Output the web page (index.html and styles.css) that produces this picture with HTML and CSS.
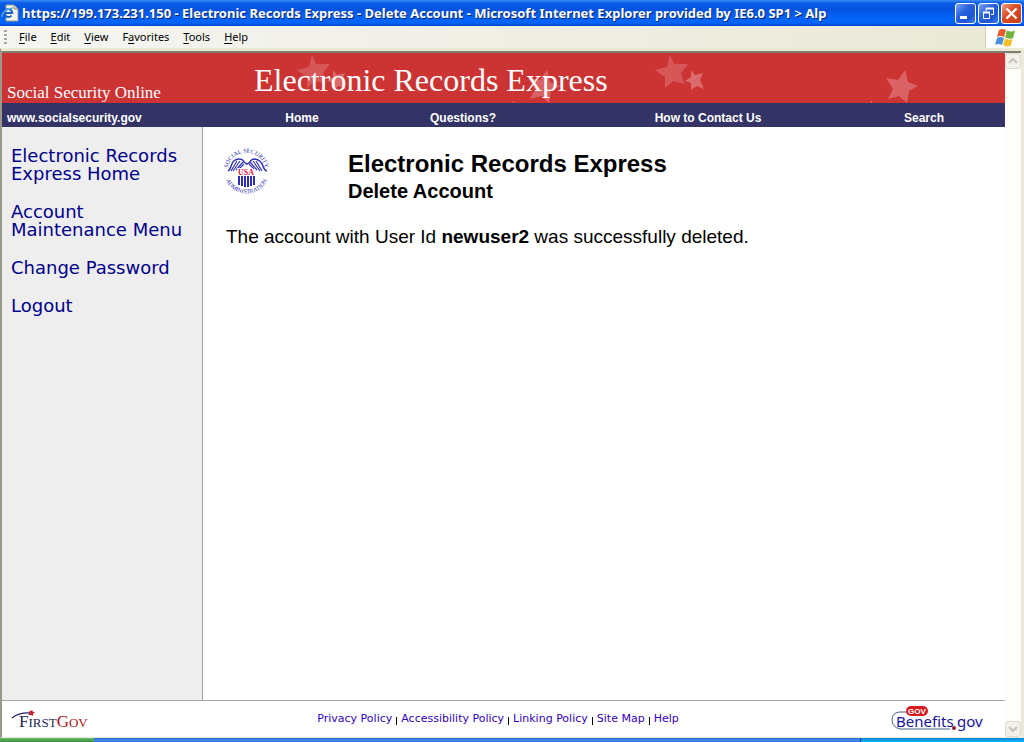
FILE: index.html
```html
<!DOCTYPE html>
<html lang="en">
<head>
<meta charset="utf-8">
<title>Electronic Records Express - Delete Account</title>
<link rel="stylesheet" href="styles.css">
</head>
<body>
<div class="window">
  <header class="titlebar">
    <svg class="page-icon" width="18" height="18" viewBox="0 0 18 18" aria-hidden="true">
      <path d="M5 1h8l4 4v12H5z" fill="#f6f5ec" stroke="#9a9a8c"/>
      <path d="M13 1v4h4" fill="#d5d3c2" stroke="#8c8c80"/>
      <path d="M10.500 11.500a4 4 0 1 1 .8-2.500H4" fill="none" stroke="#1763c4" stroke-width="2"/>
      <path d="M1 13C0 9 6 4 12 4" fill="none" stroke="#58b1ee" stroke-width="1.500"/>
    </svg>
    <h1 class="window-title">https://199.173.231.150 - Electronic Records Express - Delete Account - Microsoft Internet Explorer provided by IE6.0 SP1 &gt; Alp</h1>
    <div class="window-controls">
      <button class="control" aria-label="Minimize"><svg width="19" height="19" viewBox="0 0 19 19"><path d="M4 12h7v3H4z" fill="#fff"/></svg></button>
      <button class="control" aria-label="Restore"><svg width="19" height="19" viewBox="0 0 19 19"><path d="M7 7V4.500h7.500v6H12" fill="none" stroke="#fff"/><path d="M7 4.500h8" stroke="#fff" stroke-width="2"/><path d="M4.500 8.500h6v6h-6z" fill="none" stroke="#fff"/><path d="M4 8.500h7" stroke="#fff" stroke-width="2"/></svg></button>
      <button class="control control-close" aria-label="Close"><svg width="19" height="19" viewBox="0 0 19 19"><path d="M4.500 4.500l10 10M14.500 4.500l-10 10" stroke="#fff" stroke-width="2.400"/></svg></button>
    </div>
  </header>

  <div class="menubar">
    <span class="grip"></span>
    <button class="menu"><u>F</u>ile</button>
    <button class="menu"><u>E</u>dit</button>
    <button class="menu"><u>V</u>iew</button>
    <button class="menu">F<u>a</u>vorites</button>
    <button class="menu"><u>T</u>ools</button>
    <button class="menu"><u>H</u>elp</button>
    <div class="flag">
      <svg width="20" height="19" viewBox="0 0 20 19" aria-hidden="true">
        <path d="M4 2q3-2 7 0L9 9q-4-2-7 0z" fill="#e8592b"/>
        <path d="M12 2.500q4 2 8 0L18 10q-4 1.500-8-.5z" fill="#6db33c"/>
        <path d="M2 10q3-2 7 0l-2 7q-4-2-7 0z" fill="#4b8fdc"/>
        <path d="M10 10.500q4 2 7.500.5L16 17.500q-4 2-8-.5z" fill="#f5bf2c"/>
      </svg>
    </div>
  </div>

  <div class="viewport">
    <div class="page">
      <div class="banner">
        <svg class="stars" aria-hidden="true">
          <defs>
            <pattern id="star-tile" width="358" height="50" patternUnits="userSpaceOnUse">
              <path fill="#d75759" d="M60 2l4 9 14 0-7 9 3 11-11-3-8 7 0-11-10-7 12-3z"/>
              <path fill="#dc6b6d" d="M81 17l4 5 8-2-3 7 4 9-7-3-6 4 0-7-6-2 6-4z"/>
              <path fill="#da6264" d="M295 17l3 12 10 4-9 5-2 12-8-7-11 3 5-10-7-11 12 2z"/>
              <path fill="#dc6d6f" d="M261 48h1v2h-1z"/>
            </pattern>
          </defs>
          <rect width="100%" height="50" fill="url(#star-tile)"/>
        </svg>
        <p class="agency">Social Security Online</p>
        <p class="banner-title">Electronic Records Express</p>
      </div>
      <nav class="topnav">
        <a class="site" href="#">www.socialsecurity.gov</a>
        <a href="#">Home</a>
        <a href="#">Questions?</a>
        <a href="#">How to Contact Us</a>
        <a href="#">Search</a>
      </nav>

      <div class="columns">
        <nav class="sidebar">
          <a href="#">Electronic Records<br>Express Home</a>
          <a href="#">Account<br>Maintenance Menu</a>
          <a href="#">Change Password</a>
          <a href="#">Logout</a>
        </nav>
        <main class="content">
          <div class="heading">
            <svg class="seal" width="48" height="48" viewBox="0 0 48 48" role="img" aria-label="Social Security Administration USA">
              <defs>
                <path id="arc-top" d="M5 29A19 19 0 1 1 42 29"/>
                <path id="arc-bottom" d="M1 24A22.500 22.500 0 1 0 46 24"/>
              </defs>
              <text class="seal-ring" text-anchor="middle"><textPath href="#arc-top" startOffset="50%">SOCIAL SECURITY</textPath></text>
              <text class="seal-ring" text-anchor="middle"><textPath href="#arc-bottom" startOffset="50%">ADMINISTRATION</textPath></text>
              <g fill="none" stroke="#3434b8">
                <path d="M5 24q2-1 3-5 2-7 8-7 4 0 5 3l3 2 3-2q1-3 5-3 6 1 8 7 1 4 4 5" stroke-width="1.500"/>
                <path d="M8 24l6-10M10 24l7-10M13 23l7-8M16 22l5-5M39 24l-6-10M37 24l-7-10M34 23l-7-8M31 22l-5-5" stroke-width="1.200"/>
              </g>
              <text class="seal-usa" x="23" y="28" text-anchor="middle">USA</text>
              <path d="M15 29h2v9h-2zM18 29h2v10h-2zM21 29h2v11h-2zM24 29h2v11h-2zM27 29h2v10h-2zM30 29h2v9h-2z" fill="#2c2cb4"/>
            </svg>
            <div>
              <h2>Electronic Records Express</h2>
              <h3>Delete Account</h3>
            </div>
          </div>
          <p class="message">The account with User Id <strong>newuser2</strong> was successfully deleted.</p>
        </main>
      </div>

      <footer class="footer">
        <a class="footer-logo" href="#" aria-label="FirstGov">
          <svg width="80" height="24" viewBox="0 0 80 24">
            <text class="fg-navy" x="8" y="20"><tspan class="fg-big">F</tspan>IRST<tspan class="fg-red fg-big">G</tspan><tspan class="fg-red">OV</tspan></text>
            <path d="M1 11Q8 5 21 6" fill="none" stroke="#26215c" stroke-width="1.300"/>
            <path d="M21 3l1 2 2 0-2 2 0 2-2-1-3 0 2-2-1-2 2 0z" fill="#cc2030"/>
          </svg>
        </a>
        <div class="footer-links">
          <a href="#">Privacy Policy</a><i></i><a href="#">Accessibility Policy</a><i></i><a href="#">Linking Policy</a><i></i><a href="#">Site Map</a><i></i><a href="#">Help</a>
        </div>
        <a class="footer-logo" href="#" aria-label="GovBenefits.gov">
          <svg width="94" height="26" viewBox="0 0 94 26">
            <path d="M16 6H8Q1 7 1 14t8 9h50" fill="none" stroke="#4a6080"/>
            <rect x="15" y="0" width="22" height="10" rx="5" fill="#d81c20"/>
            <text class="gb-gov" x="26" y="8" text-anchor="middle">GOV</text>
            <text class="gb-name" x="5" y="21">Benefits</text>
            <circle cx="63" cy="22" r="2" fill="#8c1a2c"/>
            <text class="gb-name" x="66" y="21">gov</text>
          </svg>
        </a>
      </footer>
    </div>
    <div class="scrollbar">
      <button class="scroll-button" aria-label="Scroll up"><svg width="14" height="14" viewBox="0 0 14 14"><path d="M3 9l4-4 4 4" fill="none" stroke="#c5c3b8" stroke-width="2"/></svg></button>
      <button class="scroll-button" aria-label="Scroll down"><svg width="14" height="14" viewBox="0 0 14 14"><path d="M3 5l4 4 4-4" fill="none" stroke="#c5c3b8" stroke-width="2"/></svg></button>
    </div>
  </div>
  <div class="taskbar"><span class="start"></span><span class="tasks"></span><span class="tray"></span></div>
</div>
</body>
</html>
```
FILE: styles.css
```css
* { box-sizing: border-box; }
html, body { height: 100%; }
body { margin: 0; font-family: "Liberation Sans", Arial, sans-serif; color: #000; }
p, h1, h2, h3 { margin: 0; }
a { text-decoration: none; }
button { margin: 0; padding: 0; border: 0; background: none; font: inherit; color: inherit; }
svg { display: block; }

.window { display: flex; flex-direction: column; min-height: 100%; }

.titlebar {
  display: flex; align-items: center; height: 26px; padding: 0 2px 0 1px; gap: 3px;
  background: linear-gradient(#3c8cf8 0, #0a5ce6 3px, #0453e0 10px, #0464fb 19px, #0264fa 23px, #0146cc 26px);
}
.window-title {
  flex: 1; overflow: hidden; white-space: nowrap;
  font: bold 13px/20px "Noto Sans", "Open Sans", sans-serif;
  color: #fff; text-shadow: 1px 1px #0a246a;
}
.window-controls { display: flex; gap: 2px; }
.control {
  width: 21px; height: 21px; border: 1px solid #fff; border-radius: 3px;
  background: linear-gradient(135deg, #7ea5f5, #2a62dc 40%, #1d55d4 70%, #3f80f0);
}
.control-close { background: linear-gradient(135deg, #f0a088, #dc4f28 40%, #cc3a12); }

.menubar {
  display: flex; align-items: center; height: 22px;
  background: linear-gradient(90deg, #f5f5f3, #ebe8d6);
  font: 11px/16px "Noto Sans", "Open Sans", sans-serif;
}
.grip {
  width: 3px; height: 14px; margin: 0 12px 0 4px;
  background: repeating-linear-gradient(#aaa89c 0 2px, transparent 2px 4px);
}
.menu { margin-right: 14px; white-space: nowrap; }
.menu u { text-underline-offset: 2px; }
.flag {
  display: flex; align-items: center; justify-content: center; align-self: stretch;
  width: 39px; margin-left: auto; background: #fff; border-left: 1px solid #d0ccb8;
}

.viewport {
  flex: 1; display: flex; padding-top: 2px; background: #fff;
  border: solid #ece9d8; border-width: 3px 3px 1px 2px; border-left-color: #9a9888;
  box-shadow: inset 0 2px #817f70;
}
.page { flex: 1; display: flex; flex-direction: column; min-width: 0; }

.banner {
  position: relative; height: 50px; display: grid; grid-template-columns: 252px 1fr; align-items: end;
  background: #cc3333; color: #fff; font-family: "Liberation Serif", Georgia, serif;
}
.stars { position: absolute; top: 0; right: 0; width: calc(100% - 250px); height: 50px; }
.agency { padding-left: 5px; font-size: 17px; line-height: 20px; white-space: nowrap; }
.banner-title { position: relative; font-size: 32px; line-height: 46px; white-space: nowrap; }

.topnav {
  display: grid; grid-template-columns: 249fr 102fr 220fr 270fr 162fr; align-items: center;
  height: 24px; padding-top: 5px; background: #333366; font-size: 12px; line-height: 18px; font-weight: bold;
}
.topnav a { color: #fff; text-align: center; white-space: nowrap; }
.topnav .site { padding-left: 5px; text-align: left; }

.columns { flex: 1; display: flex; }
.sidebar {
  width: 201px; flex: none; display: flex; flex-direction: column; gap: 20px; padding: 20px 0 0 9px;
  background: #eeeeee; border-right: 1px solid #a5a5a5;
  font: 18px/18px "DejaVu Sans", Verdana, sans-serif; white-space: nowrap;
}
.sidebar a { color: #00008b; }
.content { flex: 1; padding: 20px; }
.heading { display: flex; gap: 77px; }
.heading h2 { font-size: 24px; line-height: 34px; }
.heading h3 { font-size: 20px; line-height: 20px; }
.message { padding: 24px 3px 0; font-size: 19px; line-height: 24px; }
.seal-ring { font: 6px "Liberation Serif", serif; fill: #2c2cb4; }
.seal-usa { font: bold 8px "Liberation Serif", serif; fill: #e01840; stroke: #fff; stroke-width: 2px; paint-order: stroke; }

.footer {
  display: flex; align-items: center; justify-content: space-between; height: 37px; padding: 0 20px 0 9px;
  border-top: 1px solid #a5a5a5;
}
.footer-links { display: flex; align-items: center; margin-left: 14px; font: 11px/16px "DejaVu Sans", Verdana, sans-serif; white-space: nowrap; }
.footer-links a { color: #3300bb; }
.footer-links i { width: 1px; height: 8px; margin: 4px 4px 0; background: #000; }
.fg-navy { font: 13px "Liberation Serif", serif; fill: #26215c; }
.fg-red { fill: #aa1428; }
.fg-big { font-size: 17px; }
.gb-gov { font: bold 8px "Liberation Sans", sans-serif; fill: #fff; }
.gb-name { font: 15px "Noto Sans", sans-serif; fill: #1a12a0; }

.scrollbar { width: 16px; flex: none; display: flex; flex-direction: column; justify-content: space-between; background: #fdfdfa; }
.scroll-button {
  width: 16px; height: 16px; border: 1px solid #dddbd0; border-radius: 3px; background: #f1f0e9;
}
.taskbar { display: flex; height: 4px; }
.start { width: 94px; background: linear-gradient(#6fba6c, #37903a); }
.tasks { flex: 1; background: linear-gradient(#2c64d8, #4690ee 60%, #2a66da); }
.tray { width: 164px; border-left: 1px solid #0b3f9c; background: linear-gradient(#0d84dc, #18b4f6); }
```
